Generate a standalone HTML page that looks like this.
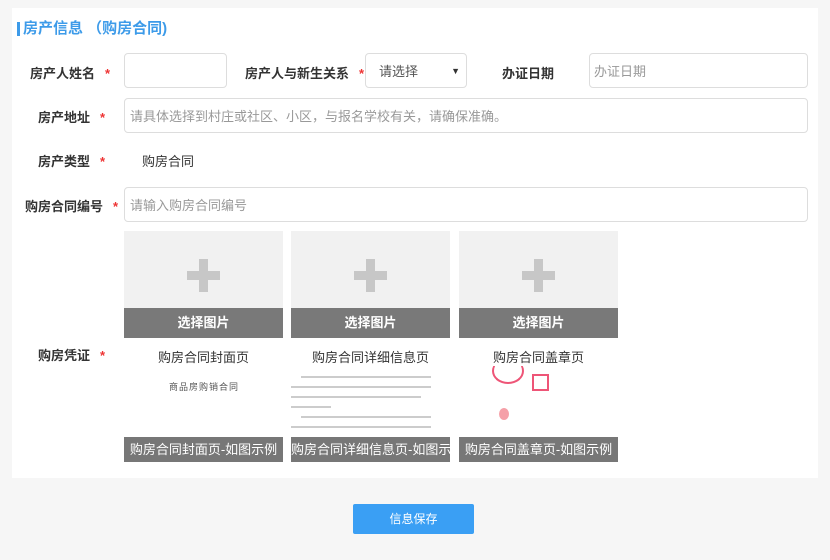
<!DOCTYPE html>
<html><head><meta charset="utf-8"><style>
*{margin:0;padding:0;box-sizing:border-box}
body{width:830px;height:560px;background:#f6f6f6;font-family:"Liberation Sans","Noto Sans CJK SC",sans-serif;position:relative;overflow:hidden;font-size:13px;color:#333}
.card{position:absolute;left:12px;top:8px;width:806px;height:470px;background:#fff}
.a{position:absolute}
.title{left:5px;top:11px;font-size:15px;color:#3d9be9;font-weight:bold;line-height:20px}
.title:before{content:"";position:absolute;left:0;top:3px;width:3px;height:14px;background:#3d9be9}
.title span{padding-left:6px}
.lab{font-weight:bold;font-size:13px;color:#333;text-align:right}
.st{color:#e33;margin-left:10px}
.in{border:1px solid #ddd;border-radius:4px;background:#fff;color:#999;font-size:13px;padding-left:6px;display:flex;align-items:center}
.box{width:159px;height:107px;background:#f1f1f1}
.box .bar{position:absolute;left:0;bottom:0;width:100%;height:30px;background:#797979;color:#fff;font-weight:bold;text-align:center;line-height:30px}
.plus1{position:absolute;left:63px;top:40px;width:33px;height:9px;background:#c7c7c7}
.plus2{position:absolute;left:75px;top:28px;width:9px;height:33px;background:#c7c7c7}
.cap{width:159px;text-align:center;font-size:13px}
.ex{width:159px;height:96px;background:#fff;overflow:hidden}
.ex .bar{position:absolute;left:0;bottom:0;width:100%;height:25px;background:#777;color:#fff;text-align:center;line-height:25px;font-size:13px;white-space:nowrap;overflow:hidden}
.btn{left:353px;top:504px;width:121px;height:30px;background:#3a9ff4;color:#fff;text-align:center;line-height:30px;font-size:12px;border-radius:2px}
</style></head><body>
<div class="card">
<div class="a title"><span>房产信息 （购房合同)</span></div>
</div>
<div class="a lab" style="left:30px;top:63px">房产人姓名<span class="st">*</span></div>
<div class="a in" style="left:124px;top:53px;width:103px;height:35px"></div>
<div class="a lab" style="left:245px;top:63px">房产人与新生关系<span class="st">*</span></div>
<div class="a in" style="left:365px;top:53px;width:102px;height:35px;color:#555;justify-content:space-between;padding:0 6px 0 13px">请选择<span style="font-size:9px;color:#333">▼</span></div>
<div class="a lab" style="left:502px;top:63px">办证日期</div>
<div class="a in" style="left:589px;top:53px;width:219px;height:35px;padding-left:4px">办证日期</div>
<div class="a lab" style="left:38px;top:107px">房产地址<span class="st">*</span></div>
<div class="a in" style="left:124px;top:98px;width:684px;height:35px;padding-left:5px">请具体选择到村庄或社区、小区，与报名学校有关，请确保准确。</div>
<div class="a lab" style="left:38px;top:151px">房产类型<span class="st">*</span></div>
<div class="a" style="left:142px;top:151px">购房合同</div>
<div class="a lab" style="left:25px;top:196px">购房合同编号<span class="st">*</span></div>
<div class="a in" style="left:124px;top:187px;width:684px;height:35px;padding-left:5px">请输入购房合同编号</div>
<div class="a lab" style="left:38px;top:345px">购房凭证<span class="st">*</span></div>

<div class="a box" style="left:124px;top:231px"><div class="plus1"></div><div class="plus2"></div><div class="bar">选择图片</div></div>
<div class="a box" style="left:291px;top:231px"><div class="plus1"></div><div class="plus2"></div><div class="bar">选择图片</div></div>
<div class="a box" style="left:459px;top:231px"><div class="plus1"></div><div class="plus2"></div><div class="bar">选择图片</div></div>
<div class="a cap" style="left:124px;top:347px">购房合同封面页</div>
<div class="a cap" style="left:291px;top:347px">购房合同详细信息页</div>
<div class="a cap" style="left:459px;top:347px">购房合同盖章页</div>

<div class="a ex" style="left:124px;top:366px"><div style="position:absolute;left:45px;top:14px;font-size:9px;color:#555;letter-spacing:1px">商品房购销合同</div><div class="bar">购房合同封面页-如图示例</div></div>
<div class="a ex" style="left:291px;top:366px">
<div style="position:absolute;left:10px;top:10px;width:130px;height:2px;background:#ccc"></div>
<div style="position:absolute;left:0;top:20px;width:140px;height:2px;background:#ccc"></div>
<div style="position:absolute;left:0;top:30px;width:130px;height:2px;background:#ccc"></div>
<div style="position:absolute;left:0;top:40px;width:40px;height:2px;background:#ccc"></div>
<div style="position:absolute;left:10px;top:50px;width:130px;height:2px;background:#ccc"></div>
<div style="position:absolute;left:0;top:60px;width:140px;height:2px;background:#ccc"></div>
<div class="bar">购房合同详细信息页-如图示例</div></div>
<div class="a ex" style="left:459px;top:366px">
<div style="position:absolute;left:33px;top:-8px;width:32px;height:26px;border:2px solid #e57;border-radius:50%;border-top:none"></div>
<div style="position:absolute;left:73px;top:8px;width:17px;height:17px;border:2px solid #e57"></div>
<div style="position:absolute;left:40px;top:42px;width:10px;height:12px;background:#f5a0a8;border-radius:50%"></div>
<div class="bar">购房合同盖章页-如图示例</div></div>

<div class="a btn">信息保存</div>
</body></html>
